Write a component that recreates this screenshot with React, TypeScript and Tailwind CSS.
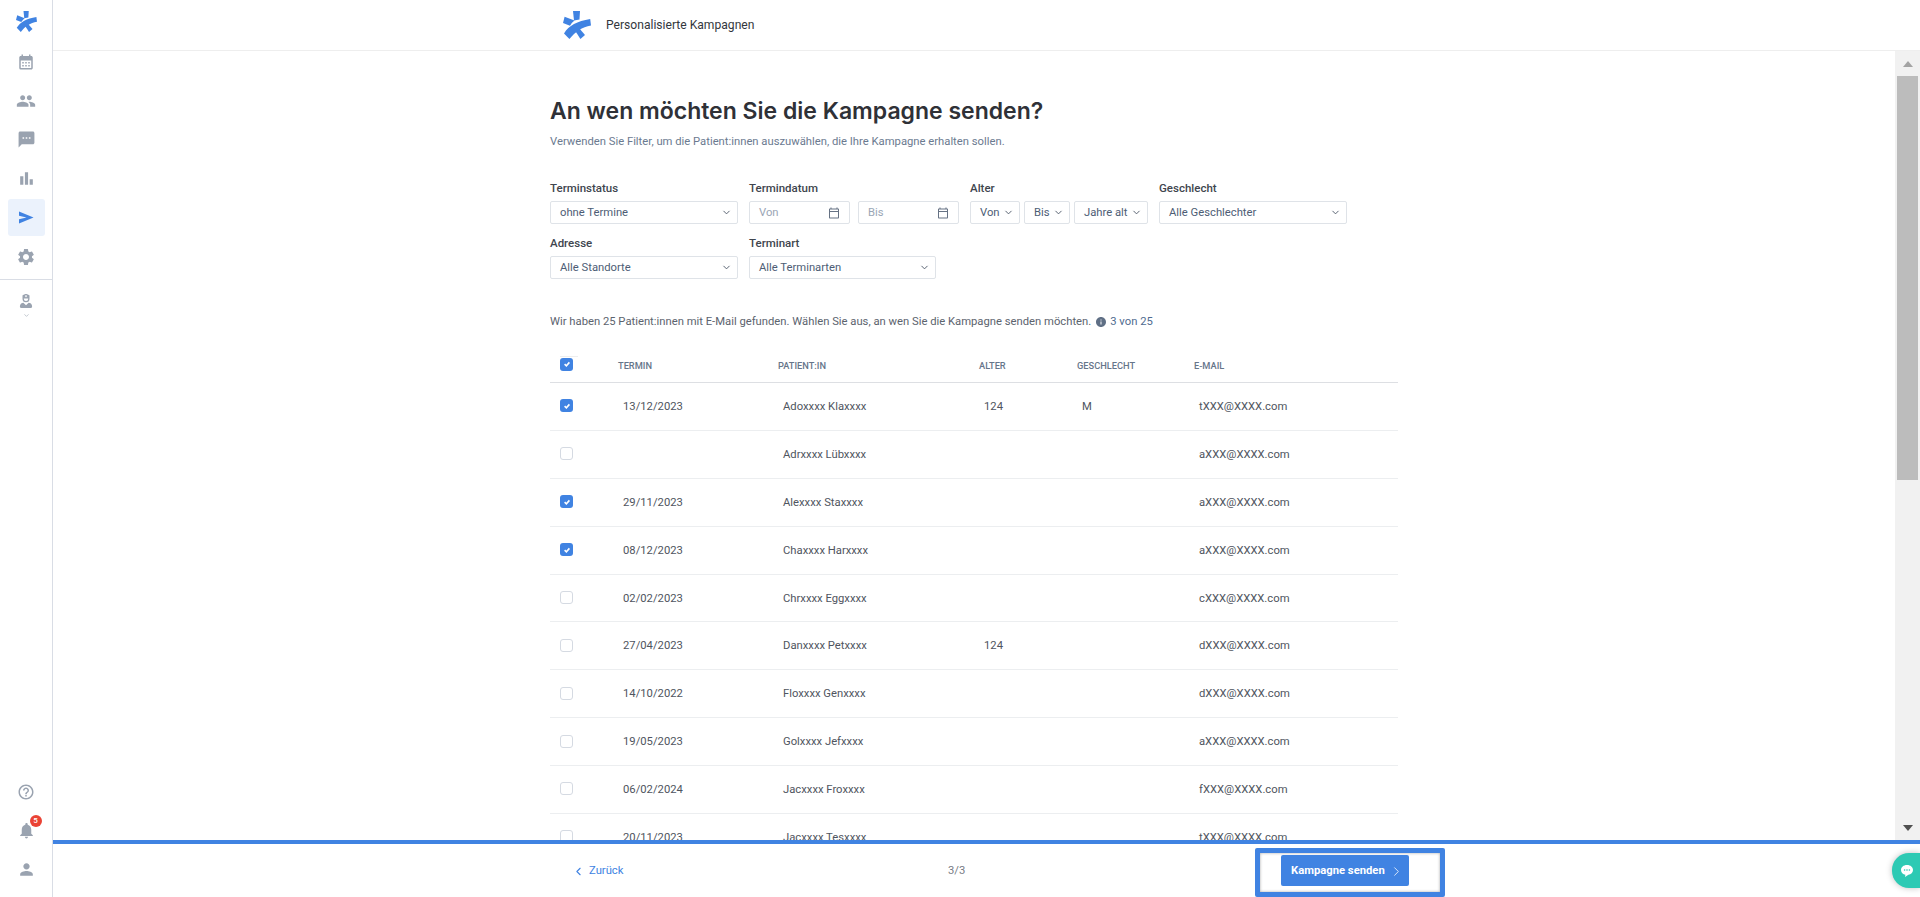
import { ChevronDown, ChevronLeft, ChevronRight } from "lucide-react";
import {
  MdBarChart,
  MdCalendarMonth,
  MdHelpOutline,
  MdInfo,
  MdNotifications,
  MdOutlineCalendarToday,
  MdPeople,
  MdPerson,
  MdSettings,
  MdSms,
} from "react-icons/md";
import { FaUserNurse } from "react-icons/fa";

const rows = [
  { date: "13/12/2023", name: "Adoxxxx Klaxxxx", age: "124", gender: "M", email: "tXXX@XXXX.com", checked: true },
  { date: "", name: "Adrxxxx Lübxxxx", age: "", gender: "", email: "aXXX@XXXX.com", checked: false },
  { date: "29/11/2023", name: "Alexxxx Staxxxx", age: "", gender: "", email: "aXXX@XXXX.com", checked: true },
  { date: "08/12/2023", name: "Chaxxxx Harxxxx", age: "", gender: "", email: "aXXX@XXXX.com", checked: true },
  { date: "02/02/2023", name: "Chrxxxx Eggxxxx", age: "", gender: "", email: "cXXX@XXXX.com", checked: false },
  { date: "27/04/2023", name: "Danxxxx Petxxxx", age: "124", gender: "", email: "dXXX@XXXX.com", checked: false },
  { date: "14/10/2022", name: "Floxxxx Genxxxx", age: "", gender: "", email: "dXXX@XXXX.com", checked: false },
  { date: "19/05/2023", name: "Golxxxx Jefxxxx", age: "", gender: "", email: "aXXX@XXXX.com", checked: false },
  { date: "06/02/2024", name: "Jacxxxx Froxxxx", age: "", gender: "", email: "fXXX@XXXX.com", checked: false },
  { date: "20/11/2023", name: "Jacxxxx Tesxxxx", age: "", gender: "", email: "tXXX@XXXX.com", checked: false },
];

const gridCols = "grid grid-cols-[68px_160px_201px_98px_117px_204px] items-center";

function Logo({ className }: { className: string }) {
  return (
    <svg viewBox="0 0 28 28" className={className} fill="#4083e2">
      <path d="M10 0 L17 0 L16.5 8.6 L11 9.6 Z" />
      <path d="M1.6 5.8 L11.5 9.6 Q9 11.4 7 14.8 L0 12 Z" />
      <path d="M15.6 16.6 L22 24 L17.4 28 L12 19.6 Z" />
      <path d="M1 22.4 C6 14.4 14 10.2 27.2 8 L28 14.4 C19 16 12.4 20.4 6.4 28 Z" />
    </svg>
  );
}

function SendIcon() {
  return (
    <svg viewBox="0 0 16 13" className="w-[15px] h-[13px]" fill="#4083e2">
      <path d="M0 0 L15.5 6.5 L0 13 L0 8.4 L8 6.5 L0 4.6 Z" />
    </svg>
  );
}

function SideItem({ children, active }: { children: React.ReactNode; active?: boolean }) {
  return (
    <div className={`h-[37px] w-[37px] mx-auto flex items-center justify-center rounded-[3px] text-[#9aa3b0] ${active ? "bg-[#ebf2fc]" : ""}`}>
      {children}
    </div>
  );
}

function Sidebar() {
  return (
    <aside className="w-[53px] shrink-0 h-full border-r border-[#d9dde5] flex flex-col bg-white">
      <div className="h-[43px] flex items-center justify-center">
        <Logo className="w-[21px] h-[21px]" />
      </div>
      <div className="flex flex-col gap-[2px]">
        <SideItem><MdCalendarMonth size={18} /></SideItem>
        <SideItem><MdPeople size={20} /></SideItem>
        <SideItem><MdSms size={19} /></SideItem>
        <SideItem><MdBarChart size={19} /></SideItem>
        <SideItem active><SendIcon /></SideItem>
        <SideItem><MdSettings size={20} /></SideItem>
      </div>
      <div className="mt-[4px] border-t border-[#d9dde5] pt-[14px] flex flex-col items-center text-[#9aa3b0]">
        <FaUserNurse size={14} />
        <ChevronDown size={7} className="mt-[4px]" />
      </div>
      <div className="mt-auto pb-[9px] flex flex-col gap-[2px]">
        <SideItem><MdHelpOutline size={18} /></SideItem>
        <SideItem>
          <div className="relative">
            <MdNotifications size={19} />
            <span className="absolute -top-[6px] -right-[6px] w-[12px] h-[12px] rounded-full bg-[#ea4335] text-white text-[8px] font-medium leading-[12px] text-center">5</span>
          </div>
        </SideItem>
        <SideItem><MdPerson size={19} /></SideItem>
      </div>
    </aside>
  );
}

function Label({ children }: { children: React.ReactNode }) {
  return <div className="h-[24px] leading-[22px] text-[11.5px] font-medium text-[#40454e]">{children}</div>;
}

function Select({ text, className }: { text: string; className: string }) {
  return (
    <div className={`h-[23px] border border-[#dfe3e8] rounded-[2px] flex items-center justify-between pl-[9px] pr-[5px] text-[11.25px] text-[#4d5d75] whitespace-nowrap ${className}`}>
      <span className="pt-[2px]">{text}</span>
      <ChevronDown size={11} className="text-[#4d5868] shrink-0" />
    </div>
  );
}

function DateInput({ text }: { text: string }) {
  return (
    <div className="w-[101px] h-[23px] border border-[#dfe3e8] rounded-[2px] flex items-center justify-between pl-[9px] pr-[9px] text-[11.25px] text-[#9aa5b5]">
      <span className="pt-[2px]">{text}</span>
      <MdOutlineCalendarToday size={12} className="text-[#667284]" />
    </div>
  );
}

function Checkbox({ checked }: { checked: boolean }) {
  if (!checked) {
    return <div className="w-[13px] h-[13px] rounded-[3px] border border-[#d5dae2] bg-white -mt-[1px]" />;
  }
  return (
    <div className="w-[13px] h-[13px] rounded-[3px] bg-[#4083e2] flex items-center justify-center -mt-[1px]">
      <svg viewBox="0 0 10 10" className="w-[8px] h-[8px]" fill="none" stroke="#fff" strokeWidth="2">
        <path d="M2 5.2 L4.2 7.2 L8 3" />
      </svg>
    </div>
  );
}

function Filters() {
  return (
    <div className="mt-[27px] w-[848px]">
      <div className="flex gap-x-[11px]">
        <div>
          <Label>Terminstatus</Label>
          <Select text="ohne Termine" className="w-[188px]" />
        </div>
        <div>
          <Label>Termindatum</Label>
          <div className="flex gap-[8px]">
            <DateInput text="Von" />
            <DateInput text="Bis" />
          </div>
        </div>
        <div>
          <Label>Alter</Label>
          <div className="flex gap-[4px]">
            <Select text="Von" className="w-[50px]" />
            <Select text="Bis" className="w-[46px]" />
            <Select text="Jahre alt" className="w-[74px]" />
          </div>
        </div>
        <div>
          <Label>Geschlecht</Label>
          <Select text="Alle Geschlechter" className="w-[188px]" />
        </div>
      </div>
      <div className="mt-[8px] flex gap-x-[11px]">
        <div>
          <Label>Adresse</Label>
          <Select text="Alle Standorte" className="w-[188px]" />
        </div>
        <div>
          <Label>Terminart</Label>
          <Select text="Alle Terminarten" className="w-[187px]" />
        </div>
      </div>
    </div>
  );
}

function PatientTable() {
  return (
    <div className="mt-[17px] w-[848px]">
      <div className={`${gridCols} h-[35px] border-b border-[#dddfe3] text-[9.25px] font-medium uppercase text-[#66758a]`}>
        <div className="pl-[10px] -mt-[4px]">
          <div className="w-[18px] border-t border-[#eeeeee] pt-[2px]">
            <Checkbox checked />
          </div>
        </div>
        <div className="pt-[1px]">Termin</div>
        <div className="pt-[1px]">Patient:in</div>
        <div className="pt-[1px]">Alter</div>
        <div className="pt-[1px]">Geschlecht</div>
        <div className="pt-[1px]">E-Mail</div>
      </div>
      {rows.map((row) => (
        <div key={row.name} className={`${gridCols} h-[47.875px] border-b border-[#eceef0] text-[11.25px] text-[#4f5560]`}>
          <div className="pl-[10px]">
            <Checkbox checked={row.checked} />
          </div>
          <div className="pl-[5px] pt-[2px]">{row.date}</div>
          <div className="pl-[5px] pt-[2px]">{row.name}</div>
          <div className="pl-[5px] pt-[2px]">{row.age}</div>
          <div className="pl-[5px] pt-[2px]">{row.gender}</div>
          <div className="pl-[5px] pt-[2px]">{row.email}</div>
        </div>
      ))}
    </div>
  );
}

function FakeScrollbar() {
  return (
    <div className="w-[25px] shrink-0 bg-[#f1f1f1] flex flex-col items-center">
      <div className="h-[25px] flex items-center justify-center">
        <div className="w-0 h-0 border-x-[5px] border-x-transparent border-b-[6px] border-b-[#a3a3a3]" />
      </div>
      <div className="w-[21px] h-[404px] bg-[#bcbcbc]" />
      <div className="mt-auto h-[25px] flex items-center justify-center">
        <div className="w-0 h-0 border-x-[5px] border-x-transparent border-t-[6px] border-t-[#505050]" />
      </div>
    </div>
  );
}

function Footer() {
  return (
    <footer className="relative h-[57px] shrink-0 border-t-[4px] border-[#4083e2] bg-white flex">
      <div className="pl-[521px] w-[1000px] shrink-0 h-[53px] flex items-center pt-[2px] text-[11.25px]">
        <div className="w-[374px] shrink-0 flex items-center text-[#4083e2]">
          <ChevronLeft size={13} className="mr-[4px] -ml-[2px]" />
          <span>Zurück</span>
        </div>
        <span className="text-[#777c85]">3/3</span>
      </div>
      <div className="ml-[202px] mt-[4px] w-[190px] h-[49px] border-[5px] border-[#4083e2] rounded-[2px] shadow-[inset_0_0_3px_rgba(0,0,0,0.35)] pt-[2px] pl-[21px]">
        <button className="w-[128px] h-[31px] pt-[2px] pl-[10px] rounded-[2px] bg-[#4083e2] text-white text-[11.25px] font-bold flex items-center justify-start gap-[4px]">
          Kampagne senden
          <ChevronRight size={15} strokeWidth={1.25} />
        </button>
      </div>
      <div className="absolute right-0 top-[9px] w-[28px] h-[35px] rounded-l-[17px] bg-[#2dcab4] shadow-[0_0_6px_rgba(0,0,0,0.25)] flex items-center pl-[8px]">
        <svg viewBox="0 0 14 14" className="w-[14px] h-[14px]" fill="#fff">
          <path d="M7 1 C3.4 1 1 3.2 1 6 C1 8.6 3 10.4 5.4 10.8 L5 13 L8.4 10.8 C11 10.4 13 8.6 13 6 C13 3.2 10.6 1 7 1 Z" />
          <circle cx="4.6" cy="6" r="0.8" fill="#2dcab4" />
          <circle cx="7" cy="6" r="0.8" fill="#2dcab4" />
          <circle cx="9.4" cy="6" r="0.8" fill="#2dcab4" />
        </svg>
      </div>
    </footer>
  );
}

export default function App() {
  return (
    <div className="h-screen w-full flex overflow-hidden bg-white font-['Roboto',sans-serif]">
      <Sidebar />
      <div className="flex-1 min-w-0 h-full flex flex-col">
        <header className="h-[51px] shrink-0 border-b border-[#eeeeee] flex items-center pl-[510px] gap-[15px]">
          <Logo className="w-[28px] h-[28px]" />
          <span className="text-[12.1px] text-[#33373d]">Personalisierte Kampagnen</span>
        </header>
        <div className="flex-1 min-h-0 flex">
          <main className="flex-1 min-w-0 overflow-hidden pl-[497px] pt-[43px]">
            <h1 className="h-[34px] leading-[34px] text-[23px] font-semibold text-[#2f3137] font-['Inter',sans-serif]">
              An wen möchten Sie die Kampagne senden?
            </h1>
            <p className="mt-[4px] h-[18px] leading-[20px] text-[11.25px] text-[#6b7a90]">
              Verwenden Sie Filter, um die Patient:innen auszuwählen, die Ihre Kampagne erhalten sollen.
            </p>
            <Filters />
            <div className="mt-[34px] h-[18px] flex items-center text-[11.25px] text-[#5c636e]">
              <span>Wir haben 25 Patient:innen mit E-Mail gefunden. Wählen Sie aus, an wen Sie die Kampagne senden möchten.</span>
              <MdInfo size={12} className="ml-[4px] text-[#5f6f85]" />
              <span className="ml-[3px] text-[#4f6b8f]">3 von 25</span>
            </div>
            <PatientTable />
          </main>
          <FakeScrollbar />
        </div>
        <Footer />
      </div>
    </div>
  );
}
